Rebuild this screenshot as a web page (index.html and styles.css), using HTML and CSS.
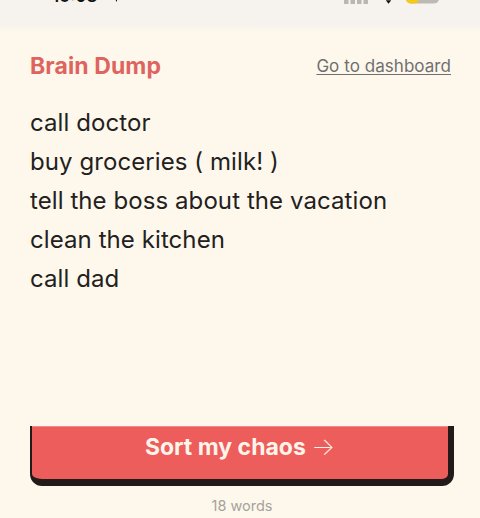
FILE: index.html
```html
<!DOCTYPE html>
<html lang="en">
<head>
<meta charset="utf-8">
<title>Brain Dump</title>
<link rel="stylesheet" href="styles.css">
</head>
<body>
<div class="status">
  <span class="time">15:08 <svg class="loc" viewBox="0 0 10 10"><path d="M9 1 1 4.6l3.8.8L6 9z"/></svg></span>
  <div class="indicators">
    <svg class="signal" viewBox="0 0 24 4"><rect x="0" y="0" width="4.500" height="4"/><rect x="6.500" y="0" width="4.500" height="4"/><rect x="13" y="0" width="4.500" height="4"/><rect x="19.500" y="0" width="4.500" height="4"/></svg>
    <svg class="wifi" viewBox="0 0 10 4"><path d="M2 0h6L5 4z"/></svg>
    <svg class="battery" viewBox="0 0 33 4"><path d="M0 0h33a6 6 0 0 1-6 3.500H6A6 6 0 0 1 0 0z" fill="#bdbab5"/><path d="M0 0h13a6 6 0 0 1-6 3.500H6A6 6 0 0 1 0 0z" fill="#f6c913"/></svg>
  </div>
</div>
<main class="page">
  <header class="head">
    <h1 class="title">Brain Dump</h1>
    <a class="link" href="#">Go to dashboard</a>
  </header>
  <div class="list">
    <p>call doctor</p>
    <p>buy groceries ( milk! )</p>
    <p>tell the boss about the vacation</p>
    <p>clean the kitchen</p>
    <p>call dad</p>
  </div>
  <button class="cta" type="button">Sort my chaos <span class="arrow">→</span></button>
  <p class="count">18 words</p>
</main>
</body>
</html>
```
FILE: styles.css
```css
* { box-sizing: border-box; }
html, body { margin: 0; height: 518px; overflow: hidden; }
body {
  background: #fef8ec;
  font-family: "Inter", sans-serif;
  color: #23211e;
  display: flex;
  flex-direction: column;
}
.status {
  height: 32px;
  background: linear-gradient(#f6f3ee 75%, #fef8ec);
  display: flex;
  justify-content: space-between;
  align-items: flex-start;
  padding: 0 41px 0 52px;
  overflow: hidden;
  flex: none;
}
.time {
  font: 600 17px/17px "Inter", sans-serif;
  color: #111;
  margin-top: -12px;
  display: flex;
  gap: 14px;
}
.loc { width: 9px; height: 9px; margin-top: 6px; fill: #111; }
.indicators { display: flex; align-items: flex-start; }
.signal { width: 24px; height: 4px; fill: #b9b7b3; }
.wifi { width: 9px; height: 4px; fill: #111; margin: 0 13.5px 0 15.5px; }
.battery { width: 33px; height: 4px; }
.page {
  flex: 1;
  display: flex;
  flex-direction: column;
  padding: 0 26px 0 30px;
  min-height: 0;
}
.head {
  display: flex;
  justify-content: space-between;
  align-items: center;
  height: 32px;
  margin-top: 18px;
  margin-right: 3px;
}
.title {
  margin: 0;
  font: 700 23px/32px "Inter", sans-serif;
  color: #de6460;
  letter-spacing: 0.1px;
}
.link {
  font: 400 17px/24px "Inter", sans-serif;
  color: #6f6f70;
  letter-spacing: 0.05px;
  text-decoration: underline;
  text-underline-offset: 2px;
}
.list { margin-top: 21px; font-size: 24px; line-height: 39px; letter-spacing: 0.08px; flex: 1; }
.list p { margin: 0; }
.cta {
  height: 60px;
  width: 424px;
  border: 0 solid #231a1a;
  border-width: 0 6px 7px 2px;
  border-radius: 0 0 12px 12px;
  box-shadow: inset 0 1px 0 #f58a84;
  background: #ed5d5b;
  color: #fff4ea;
  font: 700 23px/30px "Inter", sans-serif;
  padding: 0 0 11px;
}
.arrow { font-weight: 200; font-size: 25px; line-height: 20px; }
.count {
  margin: 0;
  height: 32px;
  padding-top: 10px;
  text-align: center;
  font-size: 14.5px;
  line-height: 20px;
  color: #a5a29c;
}
```
